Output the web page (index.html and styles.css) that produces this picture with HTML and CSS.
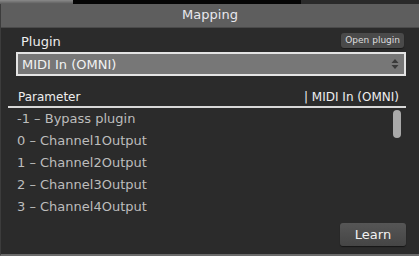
FILE: index.html
```html
<!DOCTYPE html>
<html lang="en">
<head>
    <meta charset="UTF-8">
    <title>Mapping</title>
    <link rel="stylesheet" href="styles.css">
</head>
<body>
    <!-- strip of the window behind -->
    <div class="behind">
        <div class="behind-left"></div>
        <div class="behind-mid"></div>
        <div class="behind-right"></div>
    </div>

    <div class="window">
        <div class="titlebar">Mapping</div>

        <div class="content">
            <div class="plugin-row">
                <span class="label">Plugin</span>
                <button class="small-btn">Open plugin</button>
            </div>

            <div class="select">
                <span>MIDI In (OMNI)</span>
                <svg class="arrows" width="8" height="12" viewBox="0 0 8 12">
                    <path d="M4 1 L7.5 5 L0.5 5 Z" fill="#3a3a3a"/>
                    <path d="M4 11 L7.5 7 L0.5 7 Z" fill="#3a3a3a"/>
                </svg>
            </div>

            <div class="table-head">
                <span>Parameter</span>
                <span>| MIDI In (OMNI)</span>
            </div>

            <div class="list">
                <div class="rows">
                    <div class="row">-1 – Bypass plugin</div>
                    <div class="row">0 – Channel1Output</div>
                    <div class="row">1 – Channel2Output</div>
                    <div class="row">2 – Channel3Output</div>
                    <div class="row">3 – Channel4Output</div>
                </div>
                <div class="scroll-thumb"></div>
            </div>

            <div class="footer">
                <button class="learn-btn">Learn</button>
            </div>
        </div>
    </div>
</body>
</html>
```

FILE: styles.css
```css
body {
    margin: 0;
    width: 419px;
    height: 256px;
    overflow: hidden;
    background: #1a1a1a;
    font-family: 'DejaVu Sans', 'Liberation Sans', sans-serif;
}
.behind {
    display: flex;
    height: 4px;
    overflow: hidden;
}
.behind-left {
    width: 73px;
    background: linear-gradient(#8a8a8a, #5a5a5a);
}
.behind-mid {
    flex: 1;
    background: #050505;
}
.behind-right {
    width: 118px;
    background: #2a2a2a;
}
.window {
    height: 252px;
    display: flex;
    flex-direction: column;
    background: #2b2b2b;
    border-left: 1px solid #3c3c3c;
    border-bottom: 2px solid #6a6a6a;
    box-sizing: border-box;
}
.titlebar {
    height: 23px;
    line-height: 22px;
    background: #5e5e5e;
    color: #e8e8ee;
    font-size: 13px;
    text-align: center;
    border-bottom: 1px solid #4a4a4a;
}
.content {
    flex: 1;
    display: flex;
    flex-direction: column;
    padding: 3px 13px 0 7px;
}
.plugin-row {
    display: flex;
    justify-content: space-between;
    align-items: center;
    height: 19px;
    padding-left: 13px;
}
.label {
    color: #eeeeee;
    font-size: 13px;
    margin-top: 2px;
}
.small-btn {
    background: #4a4a4a;
    color: #dddddd;
    border: none;
    border-radius: 3px;
    font-family: inherit;
    font-size: 9px;
    padding: 2px 4px 3px;
    margin-right: 2px;
    box-shadow: 0 1px 1px rgba(0, 0, 0, 0.4);
}
.select {
    margin: 2px 0 0 8px;
    height: 20px;
    border: 2px solid #e4e4e4;
    background: #777777;
    color: #f2f2f2;
    font-size: 13px;
    display: flex;
    align-items: center;
    justify-content: space-between;
    padding: 0 5px 0 4px;
}
.table-head {
    margin-top: 14px;
    display: flex;
    justify-content: space-between;
    color: #eeeeee;
    font-size: 12px;
    padding: 0 7px 2px 10px;
    border-bottom: 2px solid #d8d8d8;
}
.list {
    display: flex;
    justify-content: space-between;
    align-items: flex-start;
    padding: 0 5px 0 9px;
}
.row {
    color: #bdbdbd;
    font-size: 13px;
    height: 22px;
    line-height: 22px;
}
.scroll-thumb {
    width: 8px;
    height: 28px;
    margin-top: 2px;
    border-radius: 4px;
    background: #a9a9a9;
}
.footer {
    display: flex;
    justify-content: flex-end;
    margin-top: 5px;
}
.learn-btn {
    width: 66px;
    height: 23px;
    background: linear-gradient(#565656, #454545);
    color: #f2f2f2;
    border: none;
    border-radius: 3px;
    font-family: inherit;
    font-size: 13px;
    box-shadow: 0 1px 1px rgba(0, 0, 0, 0.5);
}
```
